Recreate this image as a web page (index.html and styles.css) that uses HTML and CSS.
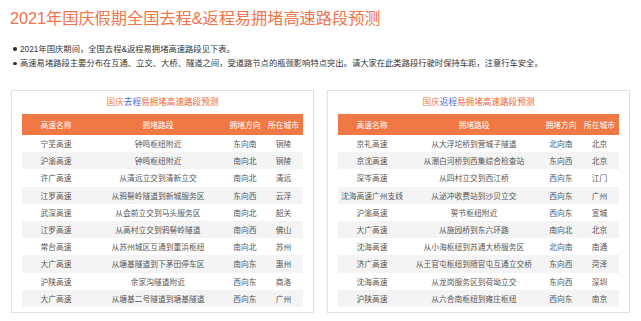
FILE: index.html
```html
<!DOCTYPE html>
<html lang="zh">
<head>
<meta charset="utf-8">
<link rel="stylesheet" href="styles.css">
</head>
<body>
<h1 class="title">2021年国庆假期全国去程&amp;返程易拥堵高速路段预测</h1>
<ul class="notes">
  <li>2021年国庆期间，全国去程&amp;返程易拥堵高速路段见下表。</li>
  <li>高速易堵路段主要分布在互通、立交、大桥、隧道之间，受道路节点的瓶颈影响特点突出。请大家在此类路段行驶时保持车距，注意行车安全。</li>
</ul>
<div class="panels">
  <section class="panel">
    <h2 class="panel-title"><span class="c1">国庆</span><span class="c2">去程</span><span class="c3">易拥堵高速路段预测</span></h2>
    <table class="grid">
      <colgroup><col class="w1"><col class="w2"><col class="w3"><col class="w4"></colgroup>
      <thead><tr><th>高速名称</th><th>拥堵路段</th><th>拥堵方向</th><th>所在城市</th></tr></thead>
      <tbody>
        <tr><td>宁芜高速</td><td>钟鸣枢纽附近</td><td>东向南</td><td>铜陵</td></tr>
        <tr><td>沪渝高速</td><td>钟鸣枢纽附近</td><td>南向北</td><td>铜陵</td></tr>
        <tr><td>许广高速</td><td>从清远立交到清新立交</td><td>南向北</td><td>清远</td></tr>
        <tr><td>江罗高速</td><td>从鸦髻岭隧道到新城服务区</td><td>东向西</td><td>云浮</td></tr>
        <tr><td>武深高速</td><td>从会前立交到马头服务区</td><td>南向北</td><td>韶关</td></tr>
        <tr><td>江罗高速</td><td>从高村立交到鸦髻岭隧道</td><td>南向西</td><td>佛山</td></tr>
        <tr><td>常台高速</td><td>从苏州城区互通到董浜枢纽</td><td>南向北</td><td>苏州</td></tr>
        <tr><td>大广高速</td><td>从塘基隧道到下茅田停车区</td><td>南向东</td><td>惠州</td></tr>
        <tr><td>沪陕高速</td><td>余家沟隧道附近</td><td>西向东</td><td>商洛</td></tr>
        <tr><td>大广高速</td><td>从塘基二号隧道到塘基隧道</td><td>西向东</td><td>广州</td></tr>
      </tbody>
    </table>
  </section>
  <section class="panel">
    <h2 class="panel-title"><span class="c1">国庆</span><span class="c2">返程</span><span class="c3">易拥堵高速路段预测</span></h2>
    <table class="grid">
      <colgroup><col class="w1"><col class="w2"><col class="w3"><col class="w4"></colgroup>
      <thead><tr><th>高速名称</th><th>拥堵路段</th><th>拥堵方向</th><th>所在城市</th></tr></thead>
      <tbody>
        <tr><td>京礼高速</td><td>从大浮坨桥到营城子隧道</td><td>北向南</td><td>北京</td></tr>
        <tr><td>京沈高速</td><td>从潮白河桥到西集综合检查站</td><td>东向西</td><td>北京</td></tr>
        <tr><td>深岑高速</td><td>从四村立交到西江桥</td><td>西向东</td><td>江门</td></tr>
        <tr><td>沈海高速广州支线</td><td>从泌冲收费站到沙贝立交</td><td>西向东</td><td>广州</td></tr>
        <tr><td>沪渝高速</td><td>誓节枢纽附近</td><td>西向东</td><td>宣城</td></tr>
        <tr><td>大广高速</td><td>从施园桥到东六环路</td><td>南向北</td><td>北京</td></tr>
        <tr><td>沈海高速</td><td>从小海枢纽到苏通大桥服务区</td><td>北向南</td><td>南通</td></tr>
        <tr><td>济广高速</td><td>从王官屯枢纽到随官屯互通立交桥</td><td>东向西</td><td>菏泽</td></tr>
        <tr><td>沈海高速</td><td>从龙岗服务区到荷坳立交</td><td>东向西</td><td>深圳</td></tr>
        <tr><td>沪陕高速</td><td>从六合南枢纽到雍庄枢纽</td><td>西向东</td><td>南京</td></tr>
      </tbody>
    </table>
  </section>
</div>
</body>
</html>
```
FILE: styles.css
```css
html, body {
  margin: 0;
  padding: 0;
  background: #ffffff;
}
body {
  font-family: "Liberation Sans", "Noto Sans CJK SC", sans-serif;
  color: #444;
}
.title {
  margin: 8px 0 0 10px;
  font-size: 16.2px;
  line-height: 20px;
  font-weight: normal;
  color: #f0754a;
}
.notes {
  list-style: none;
  margin: 13.5px 0 0 0;
  padding: 0 0 0 20px;
}
.notes li {
  position: relative;
  font-size: 8.3px;
  line-height: 14.5px;
  color: #333;
}
.notes li::before {
  content: "";
  position: absolute;
  left: -7px;
  top: 5.5px;
  width: 3.5px;
  height: 3.5px;
  border-radius: 50%;
  background: #333;
}
.panels {
  display: flex;
  gap: 13px;
  margin: 19px 11px 0 11px;
}
.panel {
  width: 303px;
  box-sizing: border-box;
  border: 1px solid #e2e2e2;
  box-shadow: 0 1px 2px rgba(0, 0, 0, 0.05);
  padding: 4px 10px 5px 10px;
}
.panel-title {
  margin: 0 0 5px 0;
  text-align: center;
  font-size: 8.6px;
  line-height: 14px;
  font-weight: normal;
}
.c1 { color: #f07f3c; }
.c2 { color: #3f6ee0; }
.c3 { color: #ec5f3d; }
.grid {
  width: 281px;
  border-collapse: collapse;
  table-layout: fixed;
  font-size: 7.75px;
}
.w1 { width: 68px; }
.w2 { width: 136px; }
.w3 { width: 38px; }
.w4 { width: 39px; }
.grid th {
  background: #ef7844;
  color: #fff;
  font-weight: normal;
  height: 21.5px;
  padding: 0;
  text-align: center;
}
.grid td {
  height: 17.2px;
  padding: 0;
  text-align: center;
  color: #555;
  white-space: nowrap;
}
.grid tbody tr:nth-child(even) td {
  background: #f4f4f4;
}
```
